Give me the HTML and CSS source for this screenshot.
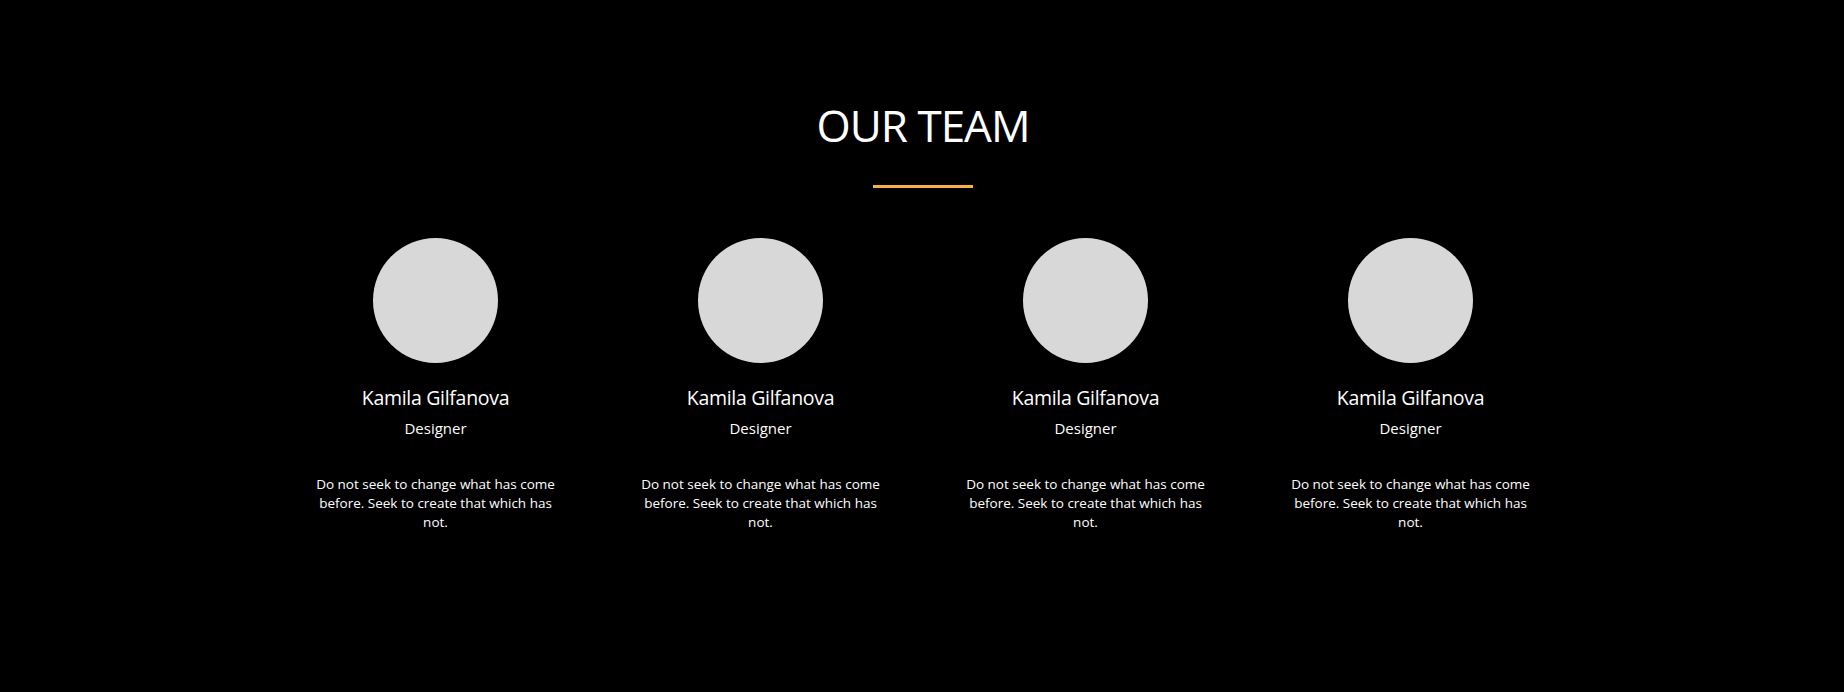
FILE: index.html
```html
<!DOCTYPE html>
<html lang="en">
<head>
<meta charset="utf-8">
<title>Our Team</title>
<link rel="stylesheet" href="styles.css">
</head>
<body>
<section class="team">
  <h2 class="team-title">OUR TEAM</h2>
  <div class="team-rule"></div>
  <div class="team-grid">
    <div class="member">
      <div class="avatar"></div>
      <h3 class="member-name">Kamila Gilfanova</h3>
      <p class="member-role">Designer</p>
      <p class="member-quote">Do not seek to change what has come before. Seek to create that which has not.</p>
    </div>
    <div class="member">
      <div class="avatar"></div>
      <h3 class="member-name">Kamila Gilfanova</h3>
      <p class="member-role">Designer</p>
      <p class="member-quote">Do not seek to change what has come before. Seek to create that which has not.</p>
    </div>
    <div class="member">
      <div class="avatar"></div>
      <h3 class="member-name">Kamila Gilfanova</h3>
      <p class="member-role">Designer</p>
      <p class="member-quote">Do not seek to change what has come before. Seek to create that which has not.</p>
    </div>
    <div class="member">
      <div class="avatar"></div>
      <h3 class="member-name">Kamila Gilfanova</h3>
      <p class="member-role">Designer</p>
      <p class="member-quote">Do not seek to change what has come before. Seek to create that which has not.</p>
    </div>
  </div>
</section>
</body>
</html>
```

FILE: styles.css
```css
html, body {
  margin: 0;
  padding: 0;
  background: #000;
  color: #fff;
  font-family: "Open Sans", "Noto Sans", sans-serif;
}

.team {
  min-height: 692px;
  box-sizing: border-box;
  padding: 95px 0 0 2px;
  display: flex;
  flex-direction: column;
  align-items: center;
}

.team-title {
  margin: 0;
  font-size: 44px;
  font-weight: 400;
  letter-spacing: -1px;
  line-height: 60px;
  color: #fff;
  text-align: center;
}

.team-rule {
  width: 100px;
  height: 3px;
  margin-top: 30px;
  background: #fcae4a;
}

.team-grid {
  margin-top: 50px;
  width: 1300px;
  display: grid;
  grid-template-columns: repeat(4, 1fr);
}

.member {
  display: flex;
  flex-direction: column;
  align-items: center;
  text-align: center;
}

.avatar {
  width: 125px;
  height: 125px;
  border-radius: 50%;
  background: #d8d8d8;
}

.member-name {
  margin: 21px 0 0;
  font-size: 19.5px;
  font-weight: 500;
  letter-spacing: -0.3px;
  line-height: 27px;
}

.member-role {
  margin: 7px 0 0;
  font-size: 15px;
  font-weight: 400;
  line-height: 20px;
}

.member-quote {
  margin: 37px 0 0;
  max-width: 250px;
  font-size: 13.5px;
  font-weight: 400;
  line-height: 19px;
}
```
